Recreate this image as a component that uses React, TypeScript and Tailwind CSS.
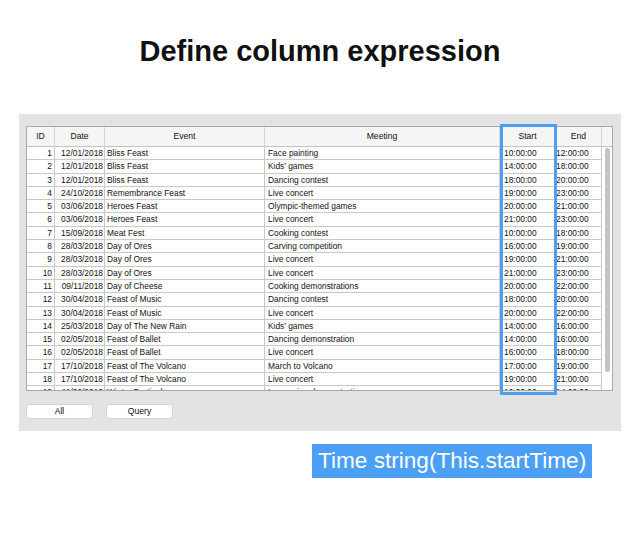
const ROWS: [number, string, string, string, string, string][] = [
  [1, "12/01/2018", "Bliss Feast", "Face painting", "10:00:00", "12:00:00"],
  [2, "12/01/2018", "Bliss Feast", "Kids’ games", "14:00:00", "18:00:00"],
  [3, "12/01/2018", "Bliss Feast", "Dancing contest", "18:00:00", "20:00:00"],
  [4, "24/10/2018", "Remembrance Feast", "Live concert", "19:00:00", "23:00:00"],
  [5, "03/06/2018", "Heroes Feast", "Olympic-themed games", "20:00:00", "21:00:00"],
  [6, "03/06/2018", "Heroes Feast", "Live concert", "21:00:00", "23:00:00"],
  [7, "15/09/2018", "Meat Fest", "Cooking contest", "10:00:00", "18:00:00"],
  [8, "28/03/2018", "Day of Ores", "Carving competition", "16:00:00", "19:00:00"],
  [9, "28/03/2018", "Day of Ores", "Live concert", "19:00:00", "21:00:00"],
  [10, "28/03/2018", "Day of Ores", "Live concert", "21:00:00", "23:00:00"],
  [11, "09/11/2018", "Day of Cheese", "Cooking demonstrations", "20:00:00", "22:00:00"],
  [12, "30/04/2018", "Feast of Music", "Dancing contest", "18:00:00", "20:00:00"],
  [13, "30/04/2018", "Feast of Music", "Live concert", "20:00:00", "22:00:00"],
  [14, "25/03/2018", "Day of The New Rain", "Kids’ games", "14:00:00", "16:00:00"],
  [15, "02/05/2018", "Feast of Ballet", "Dancing demonstration", "14:00:00", "16:00:00"],
  [16, "02/05/2018", "Feast of Ballet", "Live concert", "16:00:00", "18:00:00"],
  [17, "17/10/2018", "Feast of The Volcano", "March to Volcano", "17:00:00", "19:00:00"],
  [18, "17/10/2018", "Feast of The Volcano", "Live concert", "19:00:00", "21:00:00"],
  [19, "11/09/2018", "Winter Festival", "Ice carving demonstration", "10:00:00", "14:00:00"],
];

const cell = "shrink-0 overflow-hidden whitespace-nowrap border-r border-[#c9c9c9]";

function HeaderRow() {
  const heads: [string, string][] = [
    ["ID", "w-[28px]"],
    ["Date", "w-[50px]"],
    ["Event", "w-[160px]"],
    ["Meeting", "w-[235px]"],
    ["Start", "w-[56px]"],
    ["End", "w-[46px]"],
  ];
  return (
    <div className="flex h-[20px] border-b border-[#c4c4c4] bg-[#f5f5f5] text-[8.6px]">
      {heads.map(([label, w]) => (
        <div key={label} className={`${w} shrink-0 border-r border-[#d6d6d6] flex items-center justify-center`}>
          {label}
        </div>
      ))}
      <div className="w-[10px] shrink-0" />
    </div>
  );
}

export default function App() {
  return (
    <div
      className="w-[640px] h-[560px] bg-white flex flex-col text-[#111]"
      style={{ fontFamily: '"Liberation Sans", Arial, sans-serif' }}
    >
      <h1 className="pt-[37px] text-center text-[29px] font-bold leading-none">Define column expression</h1>

      <div className="mt-[48px] ml-[19px] w-[602px] h-[317px] bg-[#e3e3e3] pl-[7px] pt-[12px] flex flex-col">
        <div className="relative w-[587px] h-[265px] border border-[#a8a8a8] bg-white text-[8.4px] flex flex-col">
          <HeaderRow />
          <div className="flex flex-1 overflow-hidden">
            <div className="flex flex-col">
              {ROWS.map(([id, date, ev, meet, start, end]) => (
                <div key={id} className="flex h-[13.3px] shrink-0 border-b border-[#c9c9c9] leading-[12.3px]">
                  <div className={`${cell} w-[28px] text-right pr-[2px]`}>{id}</div>
                  <div className={`${cell} w-[50px] text-right pr-[1px]`}>{date}</div>
                  <div className={`${cell} w-[160px] pl-[2px]`}>{ev}</div>
                  <div className={`${cell} w-[235px] pl-[3px]`}>{meet}</div>
                  <div className={`${cell} w-[56px] pl-[4px]`}>{start}</div>
                  <div className={`${cell} w-[46px] pl-0`}>{end}</div>
                </div>
              ))}
            </div>
            <div className="w-[10px] shrink-0 pl-[3px] pt-[1px]">
              <div className="w-[5px] h-[224px] rounded-full bg-[#c3c3c3]" />
            </div>
          </div>
          <div className="absolute left-[473px] top-[-3px] w-[57px] h-[271px] border-[3px] border-[#4f9ef2]" />
        </div>

        <div className="mt-[14px] flex gap-[15px] pl-[1px] text-[8.6px]">
          <button className="w-[65px] h-[13px] bg-white rounded-[2px] shadow-[0_0_0_0.5px_#c8c8c8] leading-none">All</button>
          <button className="w-[65px] h-[13px] bg-white rounded-[2px] shadow-[0_0_0_0.5px_#c8c8c8] leading-none">Query</button>
        </div>
      </div>

      <div className="mt-[13px] ml-[312px] w-[280px] h-[34px] bg-[#4ba0f5] text-white text-[22.6px] flex items-center pl-[6px] leading-none">
        Time string(This.startTime)
      </div>
    </div>
  );
}
